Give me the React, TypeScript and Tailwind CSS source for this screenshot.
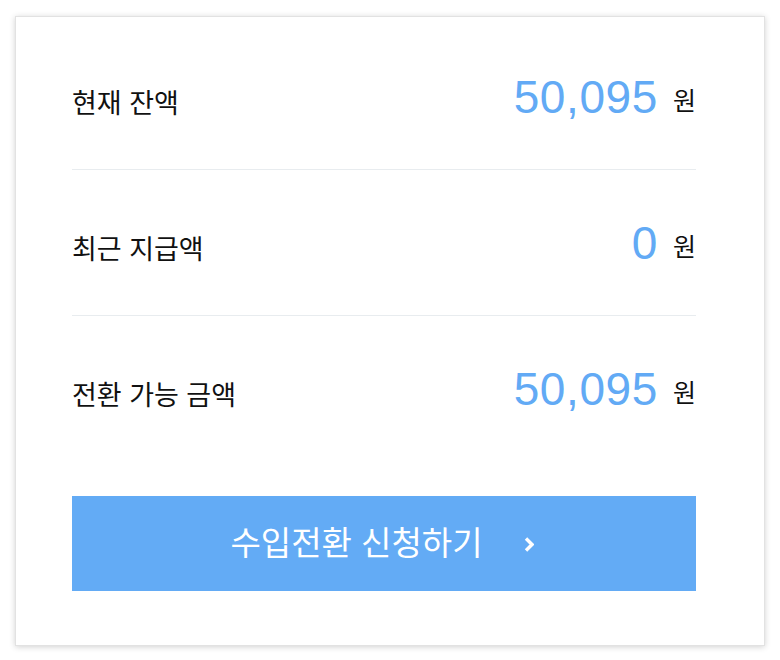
const rows = [
  { label: '현재 잔액', amount: '50,095' },
  { label: '최근 지급액', amount: '0' },
  { label: '전환 가능 금액', amount: '50,095' },
];

export default function App() {
  return (
    <div className="min-h-[660px] w-[780px] bg-white pt-4 pl-[15px] font-['Liberation_Sans','Noto_Sans_CJK_KR',sans-serif]">
      <div className="w-[750px] border border-[#e2e2e2] bg-white pt-[7px] pr-[68px] pb-[54px] pl-14 shadow-[0_1px_6px_rgba(0,0,0,0.18)]">
        {rows.map((row, i) => (
          <div
            key={row.label}
            className={`flex items-baseline justify-between pt-[50px] pb-[49px] ${
              i < rows.length - 1 ? 'border-b border-[#e8ecef]' : ''
            }`}
          >
            <span className="text-[27px] leading-none text-[#111]">{row.label}</span>
            <div className="flex items-baseline gap-[15px]">
              <span className="text-[46px] leading-none tracking-[0.6px] text-[#62aaf5]">{row.amount}</span>
              <span className="-translate-y-[3px] text-[25px] leading-none text-[#111]">원</span>
            </div>
          </div>
        ))}

        <button
          type="button"
          className="mt-[35px] flex h-[95px] w-full items-center justify-center gap-[41px] bg-[#63abf5] pr-[4px] text-white"
        >
          <span className="text-[33px] leading-none">수입전환 신청하기</span>
          <svg width="10" height="15" viewBox="0 0 10 15" className="mt-[2px]">
            <path d="M2 1.5 L8 7.5 L2 13.5" fill="none" stroke="white" strokeWidth="3.4" />
          </svg>
        </button>
      </div>
    </div>
  );
}
